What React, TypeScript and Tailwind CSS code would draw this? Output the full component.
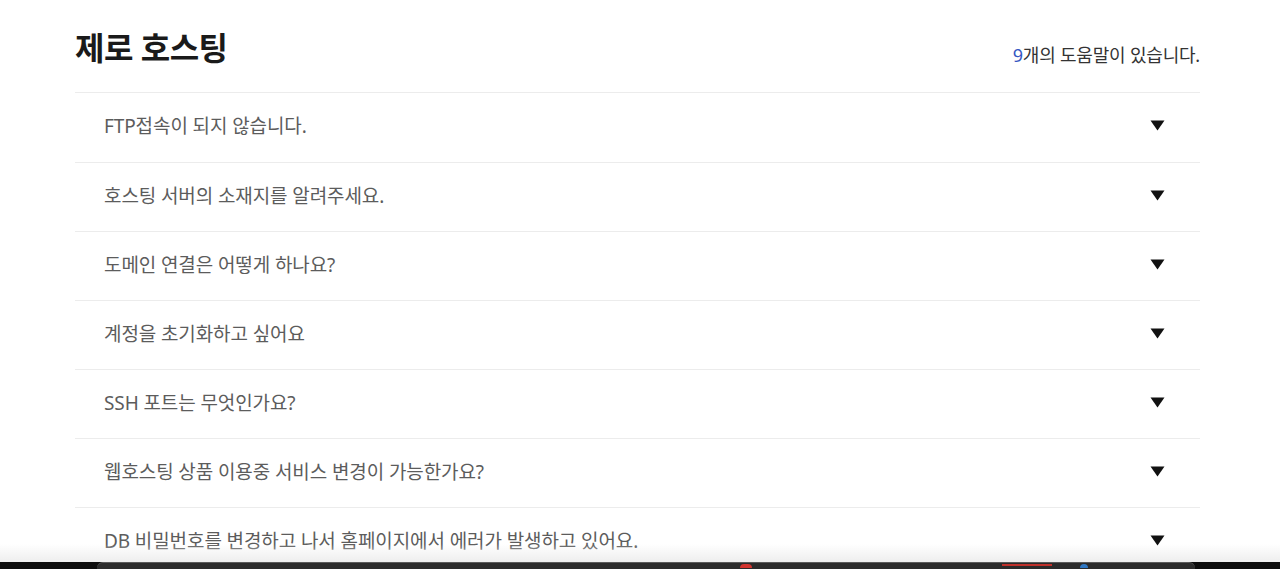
import React from 'react';

const questions: string[] = [
  'FTP접속이 되지 않습니다.',
  '호스팅 서버의 소재지를 알려주세요.',
  '도메인 연결은 어떻게 하나요?',
  '계정을 초기화하고 싶어요',
  'SSH 포트는 무엇인가요?',
  '웹호스팅 상품 이용중 서비스 변경이 가능한가요?',
  'DB 비밀번호를 변경하고 나서 홈페이지에서 에러가 발생하고 있어요.',
];

const Caret: React.FC = () => (
  <svg width="15" height="11" viewBox="0 0 15 11" className="shrink-0">
    <path d="M0.5 0.5 H14.5 L7.5 10.5 Z" fill="#111" />
  </svg>
);

const FaqRow: React.FC<{ text: string; first?: boolean }> = ({ text, first }) => (
  <div
    className={
      first
        ? 'h-[70px] shrink-0 flex items-center justify-between border-t border-[#ececec] pl-[29px] pr-[35px] pb-[4px]'
        : 'h-[69px] shrink-0 flex items-center justify-between border-t border-[#ececec] pl-[29px] pr-[35px] pb-[3px]'
    }
  >
    <span className="text-[19px] leading-[26px] text-[#5c5c5c] tracking-[-0.1px]">{text}</span>
    <Caret />
  </div>
);

export default function App() {
  return (
    <div
      className="relative h-[569px] w-full overflow-hidden bg-white flex flex-col"
      style={{ fontFamily: '"Noto Sans", "Noto Sans CJK KR", sans-serif' }}
    >
      <div className="flex-1 min-h-0 overflow-hidden">
        <div className="ml-[75px] mr-[80px] flex flex-col">
          <div className="h-[92px] shrink-0 flex items-end justify-between pb-[24px]">
            <h1 className="text-[32px] leading-[40px] font-bold text-[#1a1a1a] tracking-[-0.5px]">제로 호스팅</h1>
            <p className="text-[18px] leading-[24px] text-[#333] pb-[1px] tracking-[-0.2px]">
              <span className="text-[#3557c2]">9</span>개의 도움말이 있습니다.
            </p>
          </div>
          {questions.map((q, i) => (
            <FaqRow key={q} text={q} first={i === 0} />
          ))}
        </div>
      </div>

      {/* dock shadow over content */}
      <div className="pointer-events-none absolute left-0 right-0 bottom-[7px] h-[18px] bg-gradient-to-b from-transparent to-[#ececec]/90" />

      {/* dock strip */}
      <div className="h-[7px] shrink-0 bg-[#0c0c0c] pl-[97px] pr-[85px]">
        <div className="relative h-full rounded-t-[6px] bg-[#2b2b2b] border-t border-[#5a5a5a]">
          <span className="absolute left-[643px] top-[1px] h-[4px] w-[12px] rounded-t-full bg-[#d2332e]" />
          <span className="absolute left-[905px] top-[1px] h-[2px] w-[50px] bg-[#c0302a]" />
          <span className="absolute left-[983px] top-[1px] h-[4px] w-[8px] rounded-t-full bg-[#2f78c4]" />
        </div>
      </div>
    </div>
  );
}
